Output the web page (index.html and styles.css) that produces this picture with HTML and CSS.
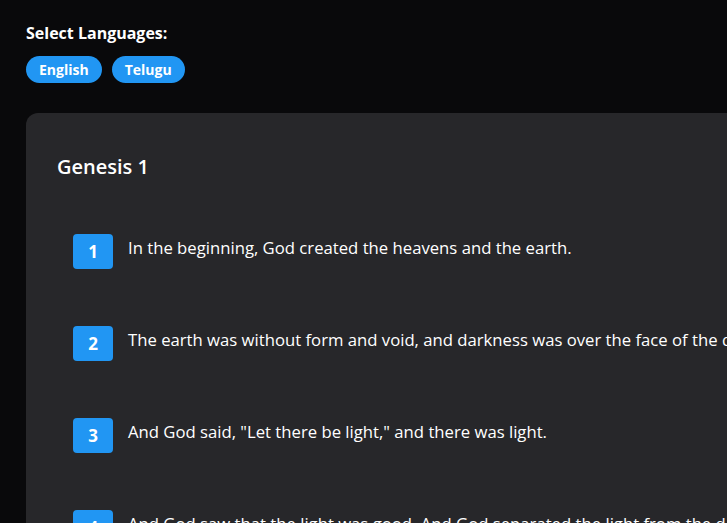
FILE: index.html
```html
<!DOCTYPE html>
<html lang="en">
<head>
<meta charset="utf-8">
<title>Bible Reader</title>
<link rel="stylesheet" href="styles.css">
</head>
<body>
<div class="page">
  <section class="lang-select">
    <h3 class="lang-title">Select Languages:</h3>
    <div class="lang-pills">
      <button class="pill">English</button>
      <button class="pill">Telugu</button>
    </div>
  </section>
  <main class="chapter">
    <h2 class="chapter-title">Genesis 1</h2>
    <ol class="verses">
      <li class="verse"><span class="verse-num">1</span><span class="verse-text">In the beginning, God created the heavens and the earth.</span></li>
      <li class="verse"><span class="verse-num">2</span><span class="verse-text">The earth was without form and void, and darkness was over the face of the deep. And the Spirit of God was hovering over the face of the waters.</span></li>
      <li class="verse"><span class="verse-num">3</span><span class="verse-text">And God said, "Let there be light," and there was light.</span></li>
      <li class="verse"><span class="verse-num">4</span><span class="verse-text">And God saw that the light was good. And God separated the light from the darkness.</span></li>
    </ol>
  </main>
</div>
</body>
</html>
```
FILE: styles.css
```css
html, body {
  margin: 0;
  padding: 0;
  background: #09090b;
  overflow: hidden;
}
body {
  font-family: "Open Sans", "Noto Sans", sans-serif;
  color: #ffffff;
}
.page {
  padding: 22px 26px 0;
  width: 1400px;
}
.lang-title {
  margin: 0;
  font-size: 16px;
  font-weight: 700;
  line-height: 22px;
}
.lang-pills {
  display: flex;
  gap: 10px;
  margin-top: 12px;
}
.pill {
  font-family: inherit;
  font-size: 14px;
  font-weight: 700;
  color: #ffffff;
  background: #2196f3;
  border: none;
  border-radius: 14px;
  height: 27px;
  padding: 0 13px;
}
.chapter {
  margin-top: 30px;
  background: #27272a;
  border-radius: 12px;
  padding: 40px 31px;
}
.chapter-title {
  margin: 0;
  font-size: 20px;
  font-weight: 600;
  line-height: 28px;
}
.verses {
  list-style: none;
  margin: 53px 0 0;
  padding: 0 16px;
  display: flex;
  flex-direction: column;
  gap: 57px;
}
.verse {
  display: flex;
  align-items: flex-start;
  gap: 15px;
  white-space: nowrap;
}
.verse-num {
  flex: none;
  width: 40px;
  height: 35px;
  border-radius: 4px;
  background: #2196f3;
  display: flex;
  align-items: center;
  justify-content: center;
  font-weight: 700;
  font-size: 17px;
}
.verse-text {
  font-size: 16.7px;
  line-height: 27px;
}
```
